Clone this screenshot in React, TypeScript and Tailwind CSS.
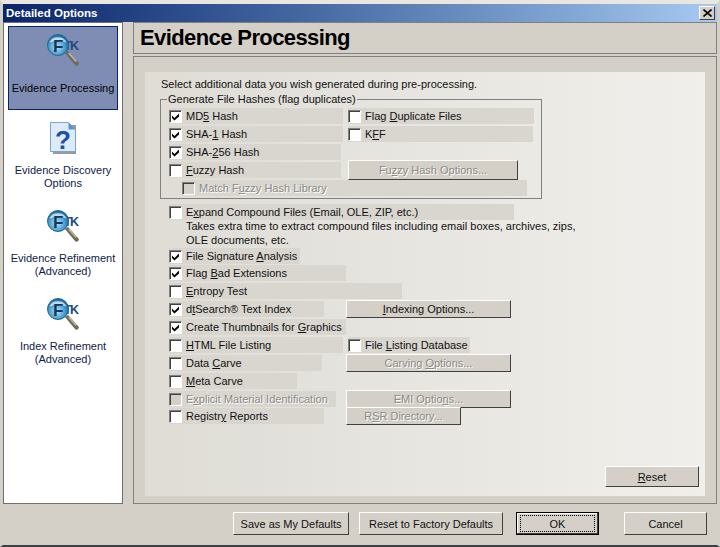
// Detailed Options dialog, Evidence Processing page
import type { ReactNode } from "react";

const raised = "border border-t-white border-l-white border-r-[#404040] border-b-[#404040] bg-[#d4d0c8]";

function FtkIcon({ id }: { id: string }) {
  return (
    <svg width="36" height="34" viewBox="0 0 36 34" className="block">
      <defs>
        <radialGradient id={id} cx="0.45" cy="0.6" r="0.6">
          <stop offset="0" stopColor="#bfe6f4" />
          <stop offset="0.6" stopColor="#4f9fd0" />
          <stop offset="1" stopColor="#17618f" />
        </radialGradient>
      </defs>
      <text x="18" y="17" fontFamily="Liberation Sans" fontWeight="700" fontSize="12" fill="#1f4a7c">T</text>
      <text x="24" y="17" fontFamily="Liberation Sans" fontWeight="700" fontSize="12.500" fill="#1f4a7c">K</text>
      <path d="M19 20l3-2 10.500 11.500c.7 1 .2 2.600-1.500 3.200-.8.2-1.500 0-2-.6z" fill="#6f6a58" />
      <path d="M22 20.500l1.500-1 7.500 8.500-1.500 1z" fill="#b7b3a2" />
      <circle cx="12" cy="12" r="10.500" fill={`url(#${id})`} stroke="#1b6b99" strokeWidth="1" />
      <path d="M3.500 9.500a9 8 0 0 1 17 0a14 6 0 0 0-17 0z" fill="#ffffff" opacity="0.65" />
      <text x="7" y="18.500" fontFamily="Liberation Sans" fontWeight="700" fontSize="17" fill="#12395f">F</text>
    </svg>
  );
}

function HelpIcon() {
  return (
    <svg width="28" height="32" viewBox="0 0 28 32" className="block">
      <path d="M3 3h23v29H3z" fill="#9a9a9a" />
      <path d="M.5.500h18l7 7v22H.5z" fill="#dcebf8" stroke="#7ba4d2" />
      <path d="M18.500.500v7h7z" fill="#5c93cf" />
      <text x="13" y="27" textAnchor="middle" fontFamily="Liberation Sans" fontWeight="700" fontSize="26" fill="#1f4fa8">?</text>
    </svg>
  );
}

function NavItem({ icon, children, active }: { icon: ReactNode; children: ReactNode; active?: boolean }) {
  return (
    <div
      className={`flex flex-col items-center text-center text-[11px] leading-[13px] ${
        active ? "h-[84px] border border-[#0a246a] bg-[#7f8db5] pt-[5px]" : "h-[88px] pt-[10px] text-[#0f1a4a]"
      }`}
    >
      <div className="flex h-[36px] items-center justify-center pl-[2px]">{icon}</div>
      <div className={active ? "mt-[14px] text-black" : "mt-[8px]"}>{children}</div>
    </div>
  );
}

function Check({ on, off }: { on?: boolean; off?: boolean }) {
  return (
    <span
      className={`flex h-[13px] w-[13px] shrink-0 items-center justify-center border border-t-[#808080] border-l-[#808080] border-r-white border-b-white shadow-[inset_1px_1px_0_#404040] ${
        off ? "bg-[#d4d0c8]" : "bg-white"
      }`}
    >
      {on ? (
        <svg width="9" height="9" viewBox="0 0 9 9">
          <path d="M1 3.500l2.500 2.500L8 1.500v3L3.500 8.500 1 6z" fill="#000" />
        </svg>
      ) : null}
    </span>
  );
}

// one check box with the grey strip of its label behind it
function Option({
  w, on, off, children, className = "",
}: { w: number; on?: boolean; off?: boolean; children: ReactNode; className?: string }) {
  return (
    <div className={`flex h-[16px] shrink-0 items-center gap-[4px] bg-[#d9d6cf] ${className}`} style={{ width: w }}>
      <Check on={on} off={off} />
      <span className={`whitespace-nowrap ${off ? "text-[#8a8a86] [text-shadow:1px_1px_0_#fff]" : ""}`}>{children}</span>
    </div>
  );
}

function Btn({ w, h = 18, off, children, className = "" }: { w: number; h?: number; off?: boolean; children: ReactNode; className?: string }) {
  return (
    <div
      className={`flex shrink-0 items-center justify-center ${raised} ${off ? "text-[#8a8a86] [text-shadow:1px_1px_0_#fff]" : ""} ${className}`}
      style={{ width: w, height: h }}
    >
      <span className="whitespace-nowrap">{children}</span>
    </div>
  );
}

export default function App() {
  return (
    <div className="relative h-[547px] w-[720px] overflow-hidden border-x-[3px] border-t-[4px] border-b-[2px] border-x-[#d4d0c8] border-t-[#e8e6df] border-b-[#404040] bg-[#d4d0c8] font-['Liberation_Sans',sans-serif] text-[11px] leading-[14px] text-[#111]">
      {/* title bar */}
      <div className="flex h-[18px] items-center justify-between bg-gradient-to-r from-[#0a246a] to-[#a6caf0] pl-[3px] pr-[2px]">
        <span className="text-[11.5px] font-bold text-white">Detailed Options</span>
        <div className={`flex h-[14px] w-[16px] items-center justify-center ${raised}`}>
          <svg width="9" height="8" viewBox="0 0 9 8">
            <path d="M.5.500l8 7M8.500.500l-8 7" stroke="#000" strokeWidth="1.600" />
          </svg>
        </div>
      </div>

      <div className="flex h-[482px] gap-[10px]">
        {/* left nav */}
        <div className="h-full w-[120px] border border-[#707070] bg-white px-[4px] pt-[3px]">
          <NavItem active icon={<FtkIcon id="lens1" />}>Evidence Processing</NavItem>
          <NavItem icon={<HelpIcon />}>Evidence Discovery<br />Options</NavItem>
          <NavItem icon={<FtkIcon id="lens2" />}>Evidence Refinement<br />(Advanced)</NavItem>
          <NavItem icon={<FtkIcon id="lens3" />}>Index Refinement<br />(Advanced)</NavItem>
        </div>

        <div className="flex w-[584px] flex-col gap-[2px]">
          <div className="flex h-[32px] items-center border border-[#808080] pl-[6px]">
            <h1 className="text-[22px] font-bold leading-none tracking-[-0.6px] text-black">Evidence Processing</h1>
          </div>

          {/* main page */}
          <div className="flex-1 border border-[#808080] px-[11px] pt-[15px]">
            <div className="flex h-[424px] flex-col bg-gradient-to-r from-[#dedcd5] to-[#f0efeb] pl-[15px] pt-[5px]">
              <div className="pl-[1px]">Select additional data you wish generated during pre-processing.</div>

              <fieldset className="mt-[1px] h-[107px] w-[382px] border border-[#808080] pl-[8px] pt-[2px]">
                <legend className="-ml-[2px] px-[1px] leading-[14px]">Generate File Hashes (flag duplicates)</legend>
                <div className="flex flex-col gap-[2px]">
                  <div className="flex gap-[5px]">
                    <Option w={174} on>MD<u>5</u> Hash</Option>
                    <Option w={186}>Flag <u>D</u>uplicate Files</Option>
                  </div>
                  <div className="flex gap-[5px]">
                    <Option w={174} on>SHA-<u>1</u> Hash</Option>
                    <Option w={185}>K<u>F</u>F</Option>
                  </div>
                  <Option w={172} on>SHA-<u>2</u>56 Hash</Option>
                  <div className="flex gap-[7px]">
                    <Option w={172}><u>F</u>uzzy Hash</Option>
                    <Btn w={170} h={20} off className="-mt-[2px]">Fu<u>z</u>zy Hash Options...</Btn>
                  </div>
                  <Option w={345} off className="-mt-[2px] ml-[13px]">Match F<u>u</u>zzy Hash Library</Option>
                </div>
              </fieldset>

              <div className="mt-[5px] flex flex-col gap-[2px] pl-[9px]">
                <div>
                  <Option w={345}>E<u>x</u>pand Compound Files (Email, OLE, ZIP, etc.)</Option>
                  <div className="-mt-[1px] pl-[17px]">
                    Takes extra time to extract compound files including email boxes, archives, zips,<br />OLE documents, etc.
                  </div>
                </div>
                <Option w={131} on className="-mt-[1px]">File Signature <u>A</u>nalysis</Option>
                <Option w={177} on className="-mt-[1px]">Flag <u>B</u>ad Extensions</Option>
                <Option w={233}><u>E</u>ntropy Test</Option>
                <div className="flex h-[16px] items-center gap-[22px]">
                  <Option w={155} on>d<u>t</u>Search® Text Index</Option>
                  <Btn w={165}><u>I</u>ndexing Options...</Btn>
                </div>
                <Option w={177} on>Create Thumbnails for <u>G</u>raphics</Option>
                <div className="flex gap-[5px]">
                  <Option w={174}><u>H</u>TML File Listing</Option>
                  <Option w={122}>File <u>L</u>isting Database</Option>
                </div>
                <div className="flex h-[16px] items-center gap-[24px]">
                  <Option w={153}>Data <u>C</u>arve</Option>
                  <Btn w={165} off>Carving <u>O</u>ptions...</Btn>
                </div>
                <Option w={128}><u>M</u>eta Carve</Option>
                <div className="flex h-[16px] items-center gap-[10px]">
                  <Option w={167} off>E<u>x</u>plicit Material Identification</Option>
                  <Btn w={165} off>EMI Optio<u>n</u>s...</Btn>
                </div>
                <div className="-mt-[1px] flex h-[16px] items-center gap-[22px]">
                  <Option w={155}>Registr<u>y</u> Reports</Option>
                  <Btn w={115} off>R<u>S</u>R Directory...</Btn>
                </div>
              </div>

              <div className="mt-auto mb-[9px] mr-[6px] flex justify-end">
                <Btn w={94} h={21}><u>R</u>eset</Btn>
              </div>
            </div>
          </div>
        </div>
      </div>

      {/* footer buttons */}
      <div className="mt-[8px] flex items-center pl-[230px]">
        <Btn w={116} h={23}>Save as My Defaults</Btn>
        <Btn w={144} h={23} className="ml-[10px]">Reset to Factory Defaults</Btn>
        <div className="ml-[13px] flex h-[23px] w-[83px] items-center justify-center border border-black bg-[#d4d0c8] shadow-[inset_-1px_-1px_0_#404040,inset_1px_1px_0_#fff]">
          <div className="flex h-[17px] w-[75px] items-center justify-center border border-dotted border-black">OK</div>
        </div>
        <Btn w={83} h={23} className="ml-[25px]">Cancel</Btn>
      </div>
    </div>
  );
}
